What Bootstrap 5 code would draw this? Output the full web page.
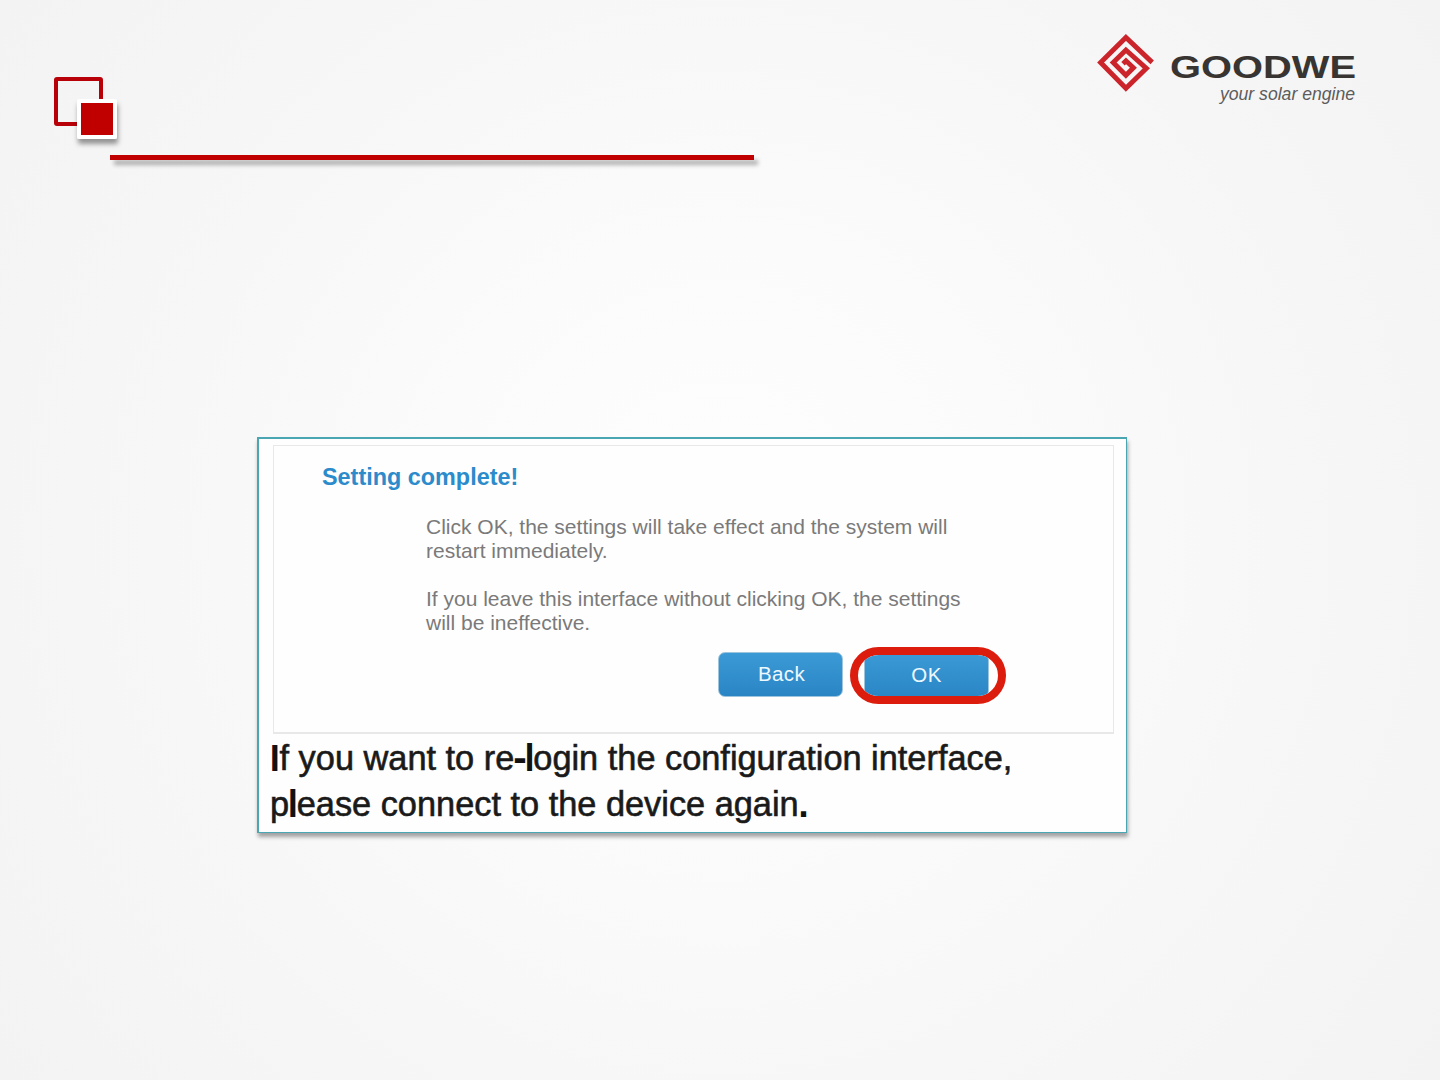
<!DOCTYPE html>
<html lang="en">
<head>
    <meta charset="UTF-8">
    <meta name="viewport" content="width=device-width, initial-scale=1.0">
    <title>GoodWe - Setting complete</title>
    <!-- Bootstrap CSS -->
    <link href="https://cdn.jsdelivr.net/npm/bootstrap@5.3.0/dist/css/bootstrap.min.css" rel="stylesheet">
    <!-- Custom CSS -->
    <style>
        body {
            font-family: "Liberation Sans", Arial, sans-serif;
            height: 1080px;
            background: radial-gradient(circle at 50% 50%, #fefefe 0, #fbfbfb 300px, #f7f7f7 560px, #f3f3f3 900px);
        }
        .slide-header {
            height: 437px;
            padding: 30px 80px 0 50px;
        }
        .slide-marker {
            margin-top: 44px;
        }
        .title-rule {
            width: 644px;
            height: 5px;
            margin: 4px 0 0 60px;
            background: #c00000;
            box-shadow: 4px 5px 4px rgba(0, 0, 0, .3);
        }
        .dialog-card {
            width: 870px;
            height: 396px;
            margin-left: 257px;
            padding: 6px 12px 0 14px;
            background: #fefefe;
            border: 2px solid #4ba6b4;
            border-width: 2px 1px 1px 2px;
            box-shadow: 1px 4px 4px rgba(0, 0, 0, .35);
        }
        .dialog-body {
            height: 289px;
            padding: 16px 0 0 48px;
            border: 2px solid #e8e8e8;
            border-width: 1px 1px 2px 1px;
        }
        .dialog-title {
            color: #2b8bcb;
            font-size: 23.4px;
            line-height: 28px;
            margin: 1px 0 24px;
        }
        .dialog-text {
            color: #7a7a7a;
            font-size: 21px;
            line-height: 24px;
            margin: 0 0 0 104px;
        }
        .dialog-actions {
            margin: 12px 107px 0 0;
        }
        .dialog-btn {
            width: 125px;
            height: 45px;
            padding: 0;
            color: #eef8ff;
            font-size: 20.5px;
            letter-spacing: .4px;
            background: linear-gradient(#3b9ad6, #2a85c4);
            border: 1px solid #9cc4dc;
            border-radius: 7px;
        }
        .back-btn {
            margin: 0 7px 2px 0;
            padding-left: 2px;
        }
        .ok-ring {
            width: 156px;
            height: 57px;
            padding-right: 3px;
            border: 8px solid #dc1c0c;
            border-radius: 29px;
            overflow: hidden;
        }
        .dialog-note {
            color: #1a1a1a;
            font-size: 34.35px;
            line-height: 46px;
            margin: 1px 0 0 -3px;
            -webkit-text-stroke: .6px #1a1a1a;
        }
        .heavy {
            color: #111;
            -webkit-text-stroke: 1.9px #111;
        }
    </style>
</head>
<body class="m-0 overflow-hidden">
    <!-- Slide header -->
    <header class="slide-header">
        <div class="d-flex justify-content-between align-items-start">
            <svg class="slide-marker" width="76" height="77" viewBox="50 74 76 77">
                <defs>
                    <filter id="markerShadow" x="-30%" y="-30%" width="170%" height="170%">
                        <feDropShadow dx="1" dy="5" stdDeviation="2.4" flood-color="#000" flood-opacity=".4"/>
                    </filter>
                </defs>
                <rect x="56" y="79" width="45" height="45" rx="1" fill="none" stroke="#b80008" stroke-width="4"/>
                <rect x="77" y="99" width="40" height="40" rx="2" fill="#fff" filter="url(#markerShadow)"/>
                <rect x="81" y="103" width="32" height="32" fill="#c00000"/>
            </svg>
            <svg width="270" height="80" viewBox="1090 30 270 80">
                <path d="M1152.2 62.4 1125.9 37.4 1100.6 62.5 1125.9 88.2 1146.4 68.3 1125.9 50 1113.2 62.5 1125.9 75.2 1133.4 67.8 1126 60.8 1123 63.8" fill="none" stroke="#cb242b" stroke-width="4.9"/>
                <text x="1170" y="77.5" font-size="32" font-weight="700" fill="#373432" textLength="186" lengthAdjust="spacingAndGlyphs">GOODWE</text>
                <text x="1220" y="100" font-size="17.5" font-style="italic" fill="#5c5c5c" textLength="135" lengthAdjust="spacingAndGlyphs">your solar engine</text>
            </svg>
        </div>
        <div class="title-rule"></div>
    </header>

    <!-- Dialog -->
    <main class="dialog-card">
        <div class="dialog-body">
            <h1 class="dialog-title fw-bold">Setting complete!</h1>
            <p class="dialog-text">Click OK, the settings will take effect and the system will<br>restart immediately.<br><br>If you leave this interface without clicking OK, the settings<br>will be ineffective.</p>
            <div class="dialog-actions d-flex justify-content-end align-items-center">
                <button type="button" class="btn dialog-btn back-btn">Back</button>
                <div class="ok-ring d-flex align-items-center justify-content-center">
                    <button type="button" class="btn dialog-btn flex-shrink-0">OK</button>
                </div>
            </div>
        </div>
        <p class="dialog-note"><span class="heavy">I</span>f you want to re<span class="heavy">-l</span>ogin the configuration interface,<br>p<span class="heavy">l</span>ease connect to the device again<span class="heavy">.</span></p>
    </main>

    <!-- Bootstrap JS -->
    <script src="https://cdn.jsdelivr.net/npm/bootstrap@5.3.0/dist/js/bootstrap.bundle.min.js"></script>
</body>
</html>
